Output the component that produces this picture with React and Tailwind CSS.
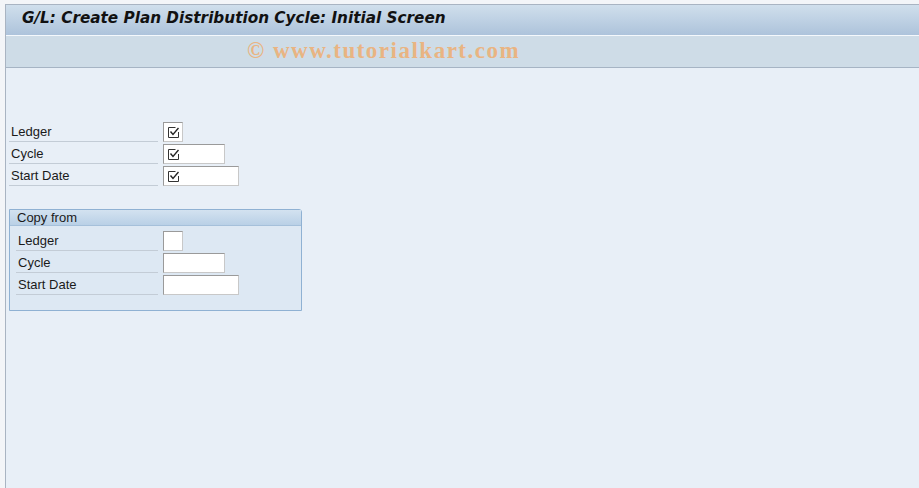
import React from 'react';

function CheckIcon() {
    return (
        <svg width="11" height="11" viewBox="0 0 11 11" className="block">
            <path d="M7.5 0.5 H0.5 V10.5 H10.5 V5" fill="none" stroke="#333" strokeWidth="1" />
            <path d="M2.5 4.5 L5 7.5 L10.5 1" fill="none" stroke="#222" strokeWidth="1.4" />
        </svg>
    );
}

function Field({ width, checked }) {
    return (
        <div
            className={`h-[20px] bg-white border border-t-[#9a9a9a] border-l-[#9a9a9a] border-r-[#c8c8c8] border-b-[#c8c8c8] flex items-center pl-[4px] ${width}`}
        >
            {checked && <CheckIcon />}
        </div>
    );
}

function Row({ label, width, checked, labelWidth }) {
    return (
        <div className="flex items-stretch h-[20px] gap-[5px]">
            <div className={`${labelWidth} border-b border-[#c3ccd6] flex items-center pl-[2px] text-[13px] text-[#1a1a1a]`}>
                {label}
            </div>
            <Field width={width} checked={checked} />
        </div>
    );
}

export default function App() {
    return (
        <div className="w-[919px] h-[488px] bg-[#f3f5f8] pt-[4px] pl-[5px] overflow-hidden" style={{ fontFamily: '"Liberation Sans", Arial, sans-serif' }}>
            <div className="h-full flex flex-col border-l border-t border-[#a9b4c2]">
                <div className="h-[31px] shrink-0 bg-gradient-to-b from-[#d0dfec] to-[#adc3db] border-b border-[#f4f8fc] flex items-center pl-[16px] pb-[3px]">
                    <h1 className="text-[15.25px] font-bold italic text-[#111]" style={{ fontFamily: '"DejaVu Sans", Verdana, sans-serif' }}>
                        G/L: Create Plan Distribution Cycle: Initial Screen
                    </h1>
                </div>
                <div className="h-[32px] shrink-0 bg-[#cedce7] border-b border-[#a6b4c4] flex items-center pl-[241px]">
                    <span className="text-[23px] font-bold text-[#e9b482] tracking-[1.5px]" style={{ fontFamily: '"Liberation Serif", "Times New Roman", serif' }}>
                        © www.tutorialkart.com
                    </span>
                </div>
                <div className="flex-1 bg-[#e8eff7] pl-[3px] pt-[54px]">
                    <div className="flex flex-col gap-[2px]">
                        <Row label="Ledger" labelWidth="w-[149px]" width="w-[20px]" checked />
                        <Row label="Cycle" labelWidth="w-[149px]" width="w-[62px]" checked />
                        <Row label="Start Date" labelWidth="w-[149px]" width="w-[76px]" checked />
                    </div>

                    <div className="mt-[23px] w-[293px] h-[102px] bg-[#dde8f3] border border-[#8fb1d3] rounded-tr-[3px]">
                        <div className="h-[16px] bg-gradient-to-b from-[#d3e2f0] to-[#b9d0e6] border-b border-[#a5c0da] flex items-center pl-[7px] text-[13px] text-[#1a1a1a]">
                            Copy from
                        </div>
                        <div className="flex flex-col gap-[2px] pt-[5px] pl-[6px]">
                            <Row label="Ledger" labelWidth="w-[142px]" width="w-[20px]" />
                            <Row label="Cycle" labelWidth="w-[142px]" width="w-[62px]" />
                            <Row label="Start Date" labelWidth="w-[142px]" width="w-[76px]" />
                        </div>
                    </div>
                </div>
            </div>
        </div>
    );
}
